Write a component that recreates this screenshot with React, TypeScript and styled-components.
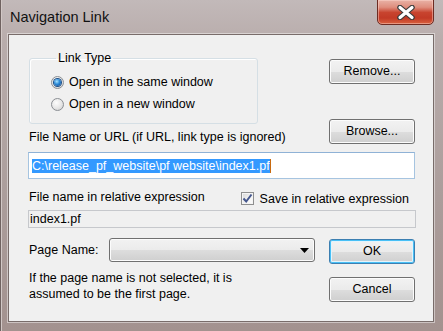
import React from "react";
import styled, { createGlobalStyle } from "styled-components";

const GlobalStyle = createGlobalStyle`
  html, body {
    margin: 0;
    padding: 0;
    background: #fff;
  }
  body {
    font-family: "Liberation Sans", Arial, sans-serif;
    font-size: 12.5px;
    color: #000;
  }
`;

const App: React.FC = () => {
  return (
    <>
      <GlobalStyle />
      <Window>
        <TitleBar>
          <Title>Navigation Link</Title>
          <CloseButton aria-label="Close">
            <svg width="20" height="15" viewBox="0 0 20 15">
              <path d="M4 2.5 L16 12.5 M16 2.5 L4 12.5" stroke="#3b3b3b" strokeWidth="5.5" strokeLinecap="round" />
              <path d="M4 2.5 L16 12.5 M16 2.5 L4 12.5" stroke="#fff" strokeWidth="3.2" strokeLinecap="round" />
            </svg>
          </CloseButton>
        </TitleBar>

        <Client>
          <TopSection>
            <LeftCol>
              <GroupBox>
                <Legend>Link Type</Legend>
                <RadioRow>
                  <Radio $checked />
                  <span>Open in the same window</span>
                </RadioRow>
                <RadioRow>
                  <Radio />
                  <span>Open in a new window</span>
                </RadioRow>
              </GroupBox>
              <Label $top={6}>File Name or URL (if URL, link type is ignored)</Label>
            </LeftCol>
            <RightCol>
              <Button $top={8}>Remove...</Button>
              <Button $top={35}>Browse...</Button>
            </RightCol>
          </TopSection>

          <TextBox>
            <Selected>C:\release_pf_website\pf website\index1.pf</Selected>
            <Caret />
          </TextBox>

          <RelRow>
            <Label>File name in relative expression</Label>
            <CheckRow>
              <CheckBox>
                <svg width="11" height="11" viewBox="0 0 11 11">
                  <path d="M1.5 5.5 L4.2 8.5 L9.5 1.5" stroke="#45578d" strokeWidth="2" fill="none" />
                </svg>
              </CheckBox>
              <span>Save in relative expression</span>
            </CheckRow>
          </RelRow>

          <ReadOnlyBox>index1.pf</ReadOnlyBox>

          <BottomSection>
            <LeftCol>
              <PageRow>
                <PageLabel>Page Name:</PageLabel>
                <Dropdown>
                  <svg width="9" height="5" viewBox="0 0 9 5">
                    <path d="M0 0 H9 L4.5 5 Z" fill="#000" />
                  </svg>
                </Dropdown>
              </PageRow>
              <Note>
                If the page name is not selected, it is
                <br />
                assumed to be the first page.
              </Note>
            </LeftCol>
            <RightCol>
              <Button $top={1} $default>
                OK
              </Button>
              <Button $top={13}>Cancel</Button>
            </RightCol>
          </BottomSection>
        </Client>
      </Window>
    </>
  );
};

export default App;

const Window = styled.div`
  width: 443px;
  height: 331px;
  box-sizing: border-box;
  display: flex;
  flex-direction: column;
  padding: 0 9px 9px 8px;
  background: linear-gradient(
    to bottom,
    #c2b9b9 0%,
    #b9adac 12%,
    #ab9d9b 60%,
    #a3928f 100%
  );
  box-shadow: inset 1px 0 0 #6f6260, inset 2px 0 0 #d2c8c6;
  overflow: hidden;
`;

const TitleBar = styled.div`
  height: 34px;
  display: flex;
  justify-content: space-between;
  align-items: flex-start;
  flex-shrink: 0;
`;

const Title = styled.div`
  padding: 9px 0 0 2px;
  font-size: 14.5px;
  line-height: 17px;
  color: #111;
`;

const CloseButton = styled.div`
  width: 57px;
  height: 26px;
  margin-top: -1px;
  box-sizing: border-box;
  border: 1px solid #6d2b22;
  border-radius: 0 0 5px 5px;
  background: linear-gradient(
    to bottom,
    #e9b2a6 0%,
    #df8e7e 30%,
    #c8442f 52%,
    #c23a26 75%,
    #d9613f 100%
  );
  box-shadow: inset 0 0 0 1px rgba(255, 220, 210, 0.45);
  display: flex;
  align-items: center;
  justify-content: center;
`;

const Client = styled.div`
  flex: 1;
  display: flex;
  flex-direction: column;
  background: #f0f0f0;
  border: 1px solid #786c6a;
  box-shadow: 0 0 0 1px rgba(255, 255, 255, 0.45);
  padding: 16px 18px 0 20px;
`;

const TopSection = styled.div`
  display: flex;
  justify-content: space-between;
  align-items: flex-start;
`;

const LeftCol = styled.div`
  display: flex;
  flex-direction: column;
`;

const RightCol = styled.div`
  display: flex;
  flex-direction: column;
`;

const GroupBox = styled.fieldset`
  margin: 0;
  width: 229px;
  box-sizing: border-box;
  padding: 5px 0 8px 21px;
  border: 1px solid #d5dfe5;
  border-radius: 3px;
  box-shadow: inset 1px 1px 0 #fff;
`;

const Legend = styled.legend`
  margin-left: 5px;
  padding: 0 2px;
  line-height: 15px;
`;

const RadioRow = styled.div`
  display: flex;
  align-items: center;
  gap: 5px;
  height: 22px;
`;

const Radio = styled.span<{ $checked?: boolean }>`
  width: 13px;
  height: 13px;
  box-sizing: border-box;
  border-radius: 50%;
  border: 1px solid #8b8f94;
  background: radial-gradient(circle at 40% 35%, #fdfdfd 0%, #e6e6e6 55%, #c9c9c9 100%);
  position: relative;
  flex-shrink: 0;

  &::after {
    content: "";
    display: ${(p) => (p.$checked ? "block" : "none")};
    position: absolute;
    left: 2px;
    top: 2px;
    width: 7px;
    height: 7px;
    border-radius: 50%;
    background: radial-gradient(circle at 40% 35%, #a8e4ff 0%, #2b8ad8 45%, #0b3f86 100%);
    box-shadow: 0 0 0 1px #1d4e86;
  }
`;

const Label = styled.div<{ $top?: number }>`
  margin-top: ${(p) => p.$top ?? 0}px;
  line-height: 15px;
`;

const Button = styled.div<{ $top?: number; $default?: boolean }>`
  margin-top: ${(p) => p.$top ?? 0}px;
  width: 86px;
  height: 25px;
  box-sizing: border-box;
  border: 1px solid ${(p) => (p.$default ? "#3c7fb1" : "#707070")};
  border-radius: 3px;
  background: linear-gradient(
    to bottom,
    #f2f2f2 0%,
    #ebebeb 50%,
    #dddddd 51%,
    #cfcfcf 100%
  );
  box-shadow: ${(p) =>
    p.$default
      ? "inset 0 0 0 1px #48c0f6, inset 0 0 0 2px #e4f3fb"
      : "inset 0 0 0 1px #fcfcfc"};
  display: flex;
  align-items: center;
  justify-content: center;
  line-height: 15px;
`;

const TextBox = styled.div`
  margin: 7px 0 0 -1px;
  height: 27px;
  box-sizing: border-box;
  border: 1px solid #a6c4e0;
  border-top-color: #8fb2d6;
  background: #fff;
  padding-left: 3px;
  display: flex;
  align-items: center;
`;

const Selected = styled.span`
  background: #3399ff;
  color: #fff;
  line-height: 14px;
  white-space: nowrap;
`;

const Caret = styled.span`
  width: 1px;
  height: 14px;
  background: #c86a10;
`;

const RelRow = styled.div`
  margin-top: 10px;
  height: 17px;
  display: flex;
  justify-content: space-between;
  align-items: center;
`;

const CheckRow = styled.div`
  display: flex;
  align-items: center;
  gap: 6px;
  margin-right: 6px;
  padding-top: 2px;
`;

const CheckBox = styled.span`
  width: 13px;
  height: 13px;
  box-sizing: border-box;
  border: 1px solid #8e8f8f;
  background: linear-gradient(135deg, #d6d6d6 0%, #f4f4f4 60%, #fdfdfd 100%);
  box-shadow: inset 0 0 0 1px #f4f4f4;
  display: flex;
  align-items: center;
  justify-content: center;
`;

const ReadOnlyBox = styled.div`
  margin: 4px -1px 0 -1px;
  height: 18px;
  box-sizing: border-box;
  border: 1px solid #c6c8cc;
  background: #f0f0f0;
  padding: 0 0 0 1px;
  line-height: 16px;
`;

const BottomSection = styled.div`
  margin-top: 10px;
  display: flex;
  justify-content: space-between;
  align-items: flex-start;
`;

const PageRow = styled.div`
  display: flex;
  align-items: center;
  height: 24px;
`;

const PageLabel = styled.span`
  width: 80px;
`;

const Dropdown = styled.div`
  width: 206px;
  height: 24px;
  box-sizing: border-box;
  border: 1px solid #707070;
  border-radius: 3px;
  background: linear-gradient(
    to bottom,
    #f2f2f2 0%,
    #ebebeb 50%,
    #dddddd 51%,
    #cfcfcf 100%
  );
  box-shadow: inset 0 0 0 1px #fcfcfc;
  display: flex;
  align-items: center;
  justify-content: flex-end;
  padding-right: 5px;
`;

const Note = styled.div`
  margin-top: 8px;
  line-height: 16px;
`;
